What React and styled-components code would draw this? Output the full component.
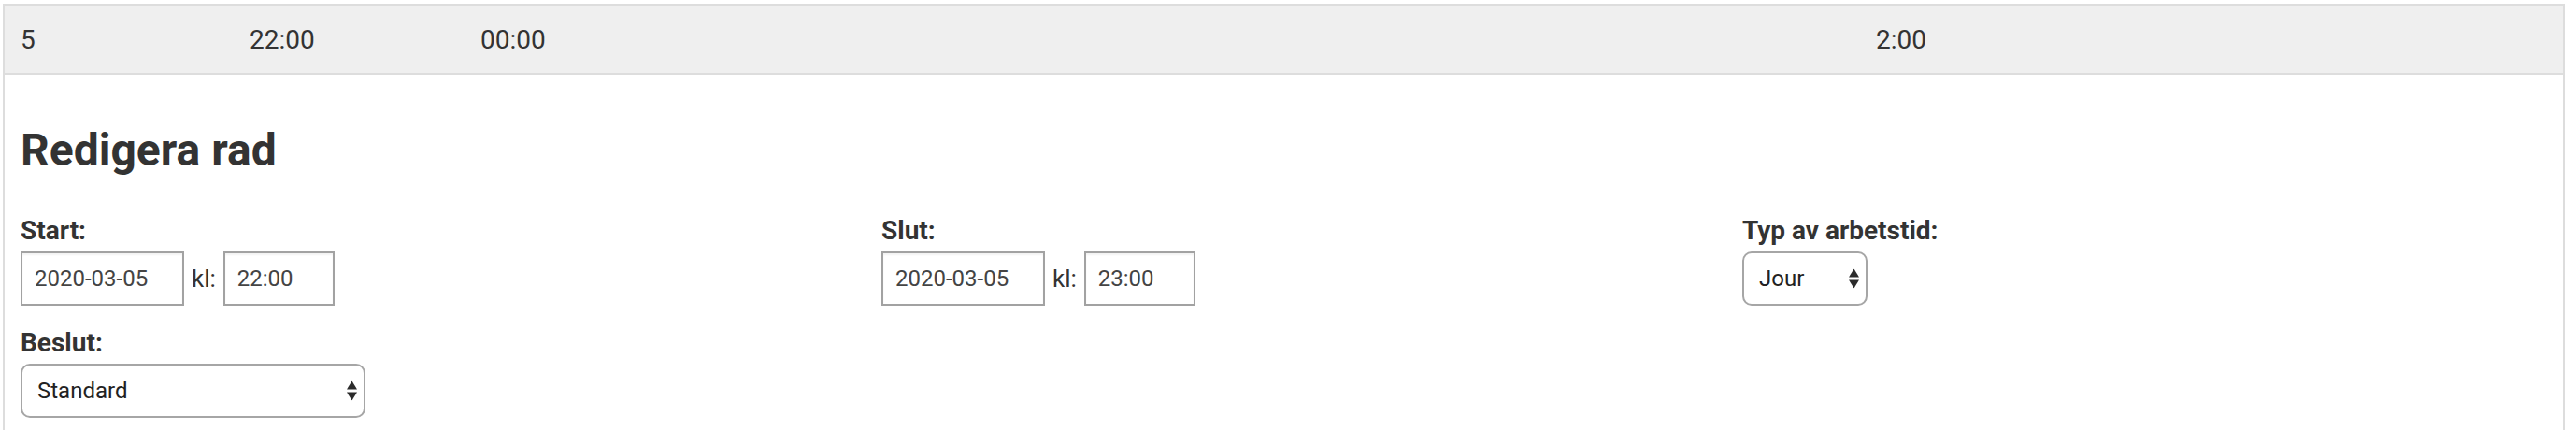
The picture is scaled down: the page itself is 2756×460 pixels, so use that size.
import React from 'react';
import styled, { createGlobalStyle } from 'styled-components';

const GlobalStyle = createGlobalStyle`
  html, body {
    margin: 0;
    padding: 0;
    background: #fff;
    overflow: hidden;
  }
  body {
    font-family: Roboto, "Liberation Sans", Arial, sans-serif;
    color: #333;
  }
`;

const Frame = styled.div`
  margin: 4px 12px 0 3px;
  min-height: 456px;
  border: 2px solid #dddddd;
  border-bottom: none;
  box-sizing: border-box;
`;

const TimeRow = styled.div`
  display: grid;
  grid-template-columns: 245px 247px 1493px 1fr;
  height: 72px;
  align-items: center;
  background: #efefef;
  border-bottom: 2px solid #dddddd;
`;

const TimeCell = styled.div`
  padding-left: 17px;
  font-size: 28px;
  color: #333;
`;

const Body = styled.div`
  padding: 55px 17px 0;
`;

const Title = styled.h2`
  margin: 0 0 39px;
  font-size: 48px;
  line-height: 1.1;
  font-weight: 700;
  color: #333;
`;

const FieldGrid = styled.div`
  display: grid;
  grid-template-columns: 921px 921px 1fr;
  row-gap: 20px;
  align-items: start;
`;

const Field = styled.div`
  display: flex;
  flex-direction: column;
  align-items: flex-start;
`;

const Label = styled.label`
  display: block;
  font-size: 28px;
  line-height: 40px;
  font-weight: 700;
  color: #333;
  margin-bottom: 2px;
`;

const Controls = styled.div`
  display: flex;
  align-items: center;
  gap: 8px;
`;

const Kl = styled.span`
  font-size: 26px;
  color: #333;
`;

const TextInput = styled.input`
  box-sizing: border-box;
  width: ${p => p.$w}px;
  height: 58px;
  margin: 0;
  padding: 0 13px;
  border: 2px solid #a2a2a2;
  border-radius: 0;
  box-shadow: inset 0 2px 2px rgba(0, 0, 0, 0.05);
  font-family: Roboto, "Liberation Sans", Arial, sans-serif;
  font-size: 24px;
  color: #444;
  background: #fff;
  outline: none;
`;

const SelectWrap = styled.div`
  position: relative;
  display: inline-block;
`;

const Select = styled.select`
  box-sizing: border-box;
  width: ${p => p.$w}px;
  height: 58px;
  margin: 0;
  padding: 0 30px 0 16px;
  border: 2px solid #a6a6a6;
  border-radius: 10px;
  appearance: none;
  -webkit-appearance: none;
  background: #fff;
  font-family: Roboto, "Liberation Sans", Arial, sans-serif;
  font-size: 24px;
  color: #222;
  outline: none;
`;

const Arrows = styled.svg`
  position: absolute;
  right: 9px;
  top: 50%;
  transform: translateY(-50%);
  pointer-events: none;
`;

const SelectArrows = () => (
  <Arrows width="11" height="21" viewBox="0 0 11 21">
    <polygon points="0,9 5.5,0 11,9" fill="#2b2b2b" />
    <polygon points="0,12 11,12 5.5,21" fill="#2b2b2b" />
  </Arrows>
);

const DropDown = ({ width, value, options }) => (
  <SelectWrap>
    <Select $w={width} defaultValue={value}>
      {options.map(o => <option key={o} value={o}>{o}</option>)}
    </Select>
    <SelectArrows />
  </SelectWrap>
);

const DateTime = ({ date, time }) => (
  <Controls>
    <TextInput $w={175} type="text" defaultValue={date} />
    <Kl>kl:</Kl>
    <TextInput $w={119} type="text" defaultValue={time} />
  </Controls>
);

export default function App() {
  return (
    <>
      <GlobalStyle />
      <Frame>
        <TimeRow>
          <TimeCell>5</TimeCell>
          <TimeCell>22:00</TimeCell>
          <TimeCell>00:00</TimeCell>
          <TimeCell>2:00</TimeCell>
        </TimeRow>
        <Body>
          <Title>Redigera rad</Title>
          <FieldGrid>
            <Field>
              <Label>Start:</Label>
              <DateTime date="2020-03-05" time="22:00" />
            </Field>
            <Field>
              <Label>Slut:</Label>
              <DateTime date="2020-03-05" time="23:00" />
            </Field>
            <Field>
              <Label>Typ av arbetstid:</Label>
              <DropDown width={134} value="Jour" options={['Jour', 'Dag', 'Natt']} />
            </Field>
            <Field>
              <Label>Beslut:</Label>
              <DropDown width={369} value="Standard" options={['Standard', 'Annat']} />
            </Field>
          </FieldGrid>
        </Body>
      </Frame>
    </>
  );
}
